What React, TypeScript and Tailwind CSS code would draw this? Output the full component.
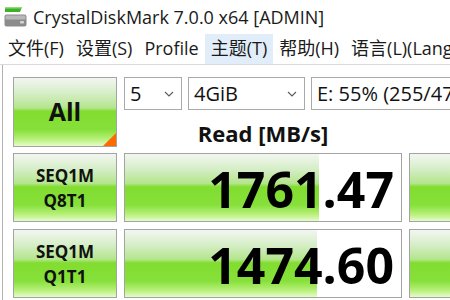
import React from "react";

const font = "font-['Open_Sans','Noto_Sans_CJK_SC',sans-serif]";
const green =
  "bg-[linear-gradient(to_bottom,#f3f6f1_0%,#d6eec8_22%,#b4e58c_44%,#82dd30_49%,#86e03a_76%,#b8f07a_90%,#e6fbcc_100%)]";

const menus = ["文件(F)", "设置(S)", "Profile", "主题(T)", "帮助(H)", "语言(L)(Language)"];

const rows = [
  { top: "SEQ1M", bottom: "Q8T1", value: "1761.47", fill: 70.3 },
  { top: "SEQ1M", bottom: "Q1T1", value: "1474.60", fill: 69.6 },
];

function AppIcon() {
  return (
    <svg width="23" height="22" viewBox="0 0 23 22">
      <path d="M1 1h17l-2 5H1z" fill="#3fae2a" />
      <path d="M1 1h17l-0.6 1.5H1z" fill="#8fe06a" />
      <rect x="0.5" y="8.5" width="22" height="12" rx="2" fill="#8c8c8c" />
      <rect x="1.5" y="9.5" width="20" height="4" rx="1" fill="#b8b8b8" />
      <rect x="16" y="15" width="4" height="2.5" rx="1" fill="#d8d8d8" />
    </svg>
  );
}

function Chevron() {
  return (
    <svg width="10" height="6" viewBox="0 0 10 6" className="shrink-0">
      <path d="M1 1l4 4 4-4" fill="none" stroke="#5a5a5a" strokeWidth="1.1" />
    </svg>
  );
}

function Select({ value, width, chevron = true }: { value: string; width: string; chevron?: boolean }) {
  return (
    <div
      className={`${width} h-[33px] shrink-0 border border-[#a9a9a9] bg-white flex items-center pl-[5px] pr-[7px] overflow-hidden`}
    >
      <span className="flex-1 text-[20px] leading-none text-[#111] whitespace-nowrap">{value}</span>
      {chevron && <Chevron />}
    </div>
  );
}

function LabelButton({ top, bottom }: { top: string; bottom: string }) {
  return (
    <div
      className={`w-[104px] h-[69px] shrink-0 border border-[#a3a3a3] ${green} flex flex-col items-center justify-center font-bold text-[17px] leading-[25px] text-[#111]`}
    >
      <span>{top}</span>
      <span>{bottom}</span>
    </div>
  );
}

function ValueBox({ value, fill }: { value: string; fill: number }) {
  return (
    <div className="relative w-[278px] h-[69px] shrink-0 border border-[#a3a3a3] bg-white overflow-hidden">
      <div className={`absolute left-0 top-0 bottom-0 ${green}`} style={{ width: `${fill}%` }} />
      <div className="relative h-full flex items-center justify-end pr-[7px] pt-[2px] font-bold text-[50px] leading-none text-black">
        {value}
      </div>
    </div>
  );
}

export default function App() {
  return (
    <div className={`w-[450px] h-[300px] overflow-hidden bg-white flex flex-col ${font}`}>
      {/* title bar */}
      <div className="h-[34px] shrink-0 flex items-center pl-[4px] gap-[6px]">
        <AppIcon />
        <span className="text-[18px] text-[#1a1a1a] whitespace-nowrap">CrystalDiskMark 7.0.0 x64 [ADMIN]</span>
      </div>

      {/* menu bar */}
      <div className="h-[31px] shrink-0 flex items-stretch pl-[2px] border-b border-[#dadada] whitespace-nowrap">
        {menus.map((m) => (
          <div
            key={m}
            className={`px-[6px] pb-[1px] flex items-center text-[18px] text-[#1a1a1a] ${
              m === "主题(T)" ? "bg-[#e1eefa]" : ""
            }`}
          >
            {m}
          </div>
        ))}
      </div>

      {/* main */}
      <div className="flex-1 ml-[2px] border-l border-[#b2b2b2] pl-[10px] pt-[12px] flex flex-col">
        <div className="flex gap-[7px]">
          <div
            className={`relative w-[104px] h-[70px] shrink-0 border border-[#a3a3a3] ${green} flex items-center justify-center font-bold text-[25px] text-[#111]`}
          >
            All
            <div className="absolute right-0 bottom-0 w-0 h-0 border-l-[13px] border-l-transparent border-b-[13px] border-b-[#ff6a00]" />
          </div>
          <div className="flex flex-col">
            <div className="flex gap-[6px]">
              <Select value="5" width="w-[58px]" />
              <Select value="4GiB" width="w-[117px]" />
              <Select value="E: 55% (255/476GiB)" width="w-[200px]" chevron={false} />
            </div>
            <div className="w-[278px] text-center font-bold text-[22px] leading-none pt-[12px] text-[#111]">
              Read [MB/s]
            </div>
          </div>
        </div>

        <div className="flex flex-col gap-[7px] mt-[6px]">
          {rows.map((r) => (
            <div key={r.bottom} className="flex gap-[7px]">
              <LabelButton top={r.top} bottom={r.bottom} />
              <ValueBox value={r.value} fill={r.fill} />
              <div className={`w-[100px] h-[69px] shrink-0 border border-[#a3a3a3] ${green}`} />
            </div>
          ))}
        </div>
      </div>
    </div>
  );
}
